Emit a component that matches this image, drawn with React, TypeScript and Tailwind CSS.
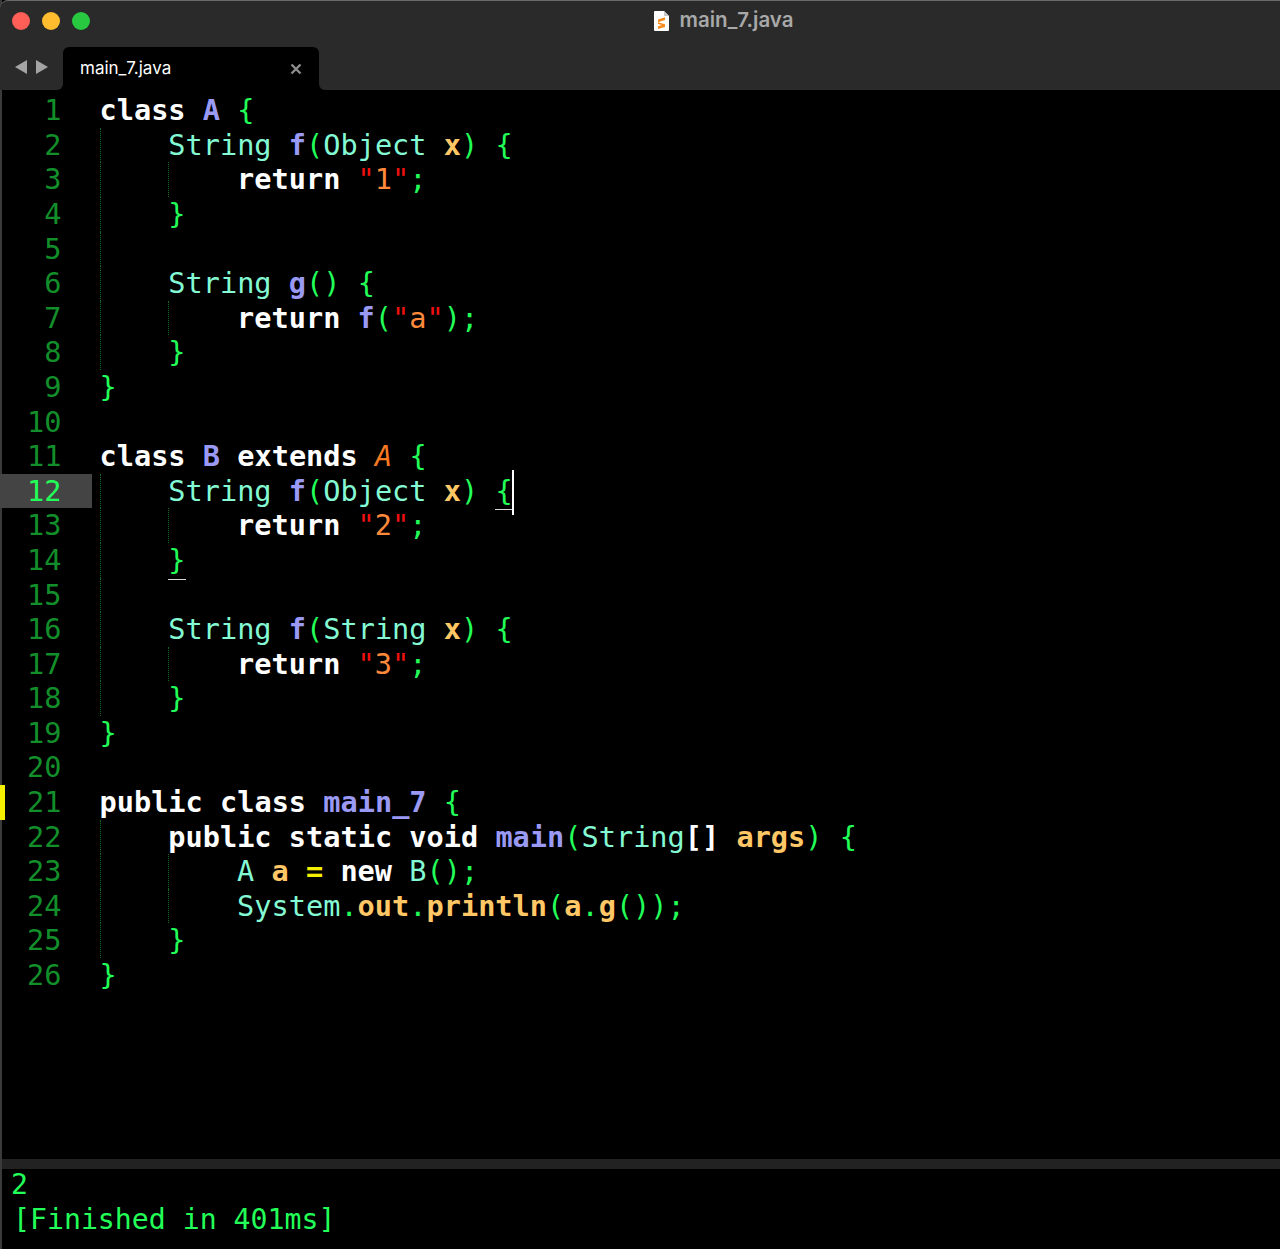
const kw = "font-bold text-white";
const cls = "font-bold text-[#9a9af5]";
const type = "text-[#84fad4]";
const punc = "text-[#22ff58]";
const param = "font-bold text-[#ffc766]";
const fn = "font-bold text-[#9a9af5]";
const str = "text-[#ff8a3c]";
const quote = "text-[#f01010]";
const inherit = "italic text-[#f87820]";
const semi = "text-[#22ff58]";
const op = "font-bold text-[#f5f000]";
const prop = "font-bold text-[#ffc766]";

type Token = [string, string?];

const lines: { guides: number; tokens: Token[] }[] = [
  { guides: 0, tokens: [["class ", kw], ["A", cls], [" "], ["{", punc]] },
  { guides: 1, tokens: [["String ", type], ["f", fn], ["(", punc], ["Object ", type], ["x", param], [")", punc], [" "], ["{", punc]] },
  { guides: 2, tokens: [["return ", kw], ['"', quote], ["1", str], ['"', quote], [";", semi]] },
  { guides: 1, tokens: [["}", punc]] },
  { guides: 1, tokens: [] },
  { guides: 1, tokens: [["String ", type], ["g", fn], ["()", punc], [" "], ["{", punc]] },
  { guides: 2, tokens: [["return ", kw], ["f", fn], ["(", punc], ['"', quote], ["a", str], ['"', quote], [")", punc], [";", semi]] },
  { guides: 1, tokens: [["}", punc]] },
  { guides: 0, tokens: [["}", punc]] },
  { guides: 0, tokens: [] },
  { guides: 0, tokens: [["class ", kw], ["B", cls], [" extends ", kw], ["A", inherit], [" "], ["{", punc]] },
  { guides: 1, tokens: [["String ", type], ["f", fn], ["(", punc], ["Object ", type], ["x", param], [")", punc], [" "], ["{", punc + " match caret"]] },
  { guides: 2, tokens: [["return ", kw], ['"', quote], ["2", str], ['"', quote], [";", semi]] },
  { guides: 1, tokens: [["}", punc + " match"]] },
  { guides: 1, tokens: [] },
  { guides: 1, tokens: [["String ", type], ["f", fn], ["(", punc], ["String ", type], ["x", param], [")", punc], [" "], ["{", punc]] },
  { guides: 2, tokens: [["return ", kw], ['"', quote], ["3", str], ['"', quote], [";", semi]] },
  { guides: 1, tokens: [["}", punc]] },
  { guides: 0, tokens: [["}", punc]] },
  { guides: 0, tokens: [] },
  { guides: 0, tokens: [["public class ", kw], ["main_7", cls], [" "], ["{", punc]] },
  { guides: 1, tokens: [["public static void ", kw], ["main", fn], ["(", punc], ["String", type], ["[] ", kw], ["args", param], [")", punc], [" "], ["{", punc]] },
  { guides: 2, tokens: [["A ", type], ["a ", param], ["= ", op], ["new ", kw], ["B", type], ["()", punc], [";", semi]] },
  { guides: 2, tokens: [["System", type], [".", punc], ["out", prop], [".", punc], ["println", prop], ["(", punc], ["a", param], [".", punc], ["g", prop], ["())", punc], [";", semi]] },
  { guides: 1, tokens: [["}", punc]] },
  { guides: 0, tokens: [["}", punc]] },
];

const SublimeFile = () => (
  <svg width="17" height="22" viewBox="0 0 17 22" className="mr-[10px]">
    <path d="M1 2a1 1 0 0 1 1-1h9l5 5v14a1 1 0 0 1-1 1H2a1 1 0 0 1-1-1z" fill="#ffffff" />
    <path d="M11 1v5h5z" fill="#c8c8c8" />
    <path d="M5 9.500l7-2.200v2.800L5 12.300z" fill="#f58a1f" />
    <path d="M5 12.300l7 2v2.600l-7 2.200v-2.800l4-1.200-4-1z" fill="#f58a1f" />
  </svg>
);

const App = () => {
  return (
    <div className="flex h-[1249px] w-[1280px] flex-col border-l-2 border-[#3a3a3a] bg-black font-['DejaVu_Sans_Mono',monospace] text-[28.6px]">
      {/* title bar */}
      <div className="relative -ml-[2px] flex h-[47px] shrink-0 items-center justify-center rounded-tl-lg border-t border-[#6a6a6a] bg-[#2a2a2a] pb-[7px] pl-[166px]">
        <div className="absolute left-[12px] top-[11px] flex gap-3">
          <span className="h-[18px] w-[18px] rounded-full bg-[#ff5f57]" />
          <span className="h-[18px] w-[18px] rounded-full bg-[#febc2e]" />
          <span className="h-[18px] w-[18px] rounded-full bg-[#28c840]" />
        </div>
        <SublimeFile />
        <span className="font-['Inter',sans-serif] text-[20.500px] font-semibold leading-none text-[#a8a8a8]">main_7.java</span>
      </div>

      {/* tabs */}
      <div className="-ml-[2px] flex h-[43px] shrink-0 items-center bg-[#2a2a2a]">
        <div className="flex w-[63px] shrink-0 gap-[9px] pb-[4px] pl-[15px]">
          <svg width="12" height="14" viewBox="0 0 12 14"><path d="M0 7l12-7v14z" fill="#a4a4a4" /></svg>
          <svg width="12" height="14" viewBox="0 0 12 14"><path d="M12 7L0 0v14z" fill="#a4a4a4" /></svg>
        </div>
        <div className="relative flex h-full w-[256px] items-center justify-between rounded-t-md bg-black pl-[17px] pr-[17px]">
          <span className="absolute -left-[6px] bottom-0 h-[6px] w-[6px] bg-black"><span className="block h-full w-full rounded-br-md bg-[#2a2a2a]" /></span>
          <span className="absolute -right-[6px] bottom-0 h-[6px] w-[6px] bg-black"><span className="block h-full w-full rounded-bl-md bg-[#2a2a2a]" /></span>
          <span className="font-['Inter',sans-serif] text-[17px] leading-none text-white">main_7.java</span>
          <svg width="12" height="12" viewBox="0 0 12 12"><path d="M1.500 1.500l9 9M10.500 1.500l-9 9" stroke="#8c8c8c" strokeWidth="2.400" /></svg>
        </div>
      </div>

      {/* editor */}
      <div className="flex-1 pt-[3.2px]">
        {lines.map((line, i) => {
          const current = i === 11;
          return (
            <div key={i} className="relative flex h-[34.6px] items-stretch leading-[34.6px]">
              {current && <span className="absolute -left-[2px] top-0 h-full w-[92px] bg-[#444444]" />}
              {i === 20 && <span className="absolute -left-[2px] top-0 h-full w-[5px] bg-[#f5f000]" />}
              <span className={`relative w-[59.500px] shrink-0 text-right ${current ? "text-[#22ff58]" : "text-[#128f2a]"}`}>{i + 1}</span>
              <span className="w-[30px] shrink-0" />
              <div className="flex whitespace-pre pl-[8px]">
                {Array.from({ length: line.guides }).map((_, g) => (
                  <span key={g} className="w-[68.8px] border-l border-dotted border-[#126a22]" />
                ))}
                {line.tokens.map(([text, style], t) => {
                  const match = style?.includes("match");
                  const caret = style?.includes("caret");
                  const base = style?.replace(" match caret", "").replace(" match", "");
                  return (
                    <span key={t} className={`relative ${base ?? ""}`}>
                      {text}
                      {match && <span className="absolute bottom-[-2px] left-0 h-px w-full bg-[#d8d8d8]" />}
                      {caret && <span className="absolute -right-[1px] top-[-4px] h-[45px] w-[2px] bg-white" />}
                    </span>
                  );
                })}
              </div>
            </div>
          );
        })}
      </div>

      {/* build output */}
      <div className="h-[10px] shrink-0 bg-[#222222]" />
      <div className="h-[80px] shrink-0 whitespace-pre pl-[10px] text-[28.200px] leading-[34.6px] text-[#22ff58]">
        <div className="-ml-px -mt-[1px]">2</div>
        <div className="ml-[1px]">[Finished in 401ms]</div>
      </div>
    </div>
  );
};

export default App;
